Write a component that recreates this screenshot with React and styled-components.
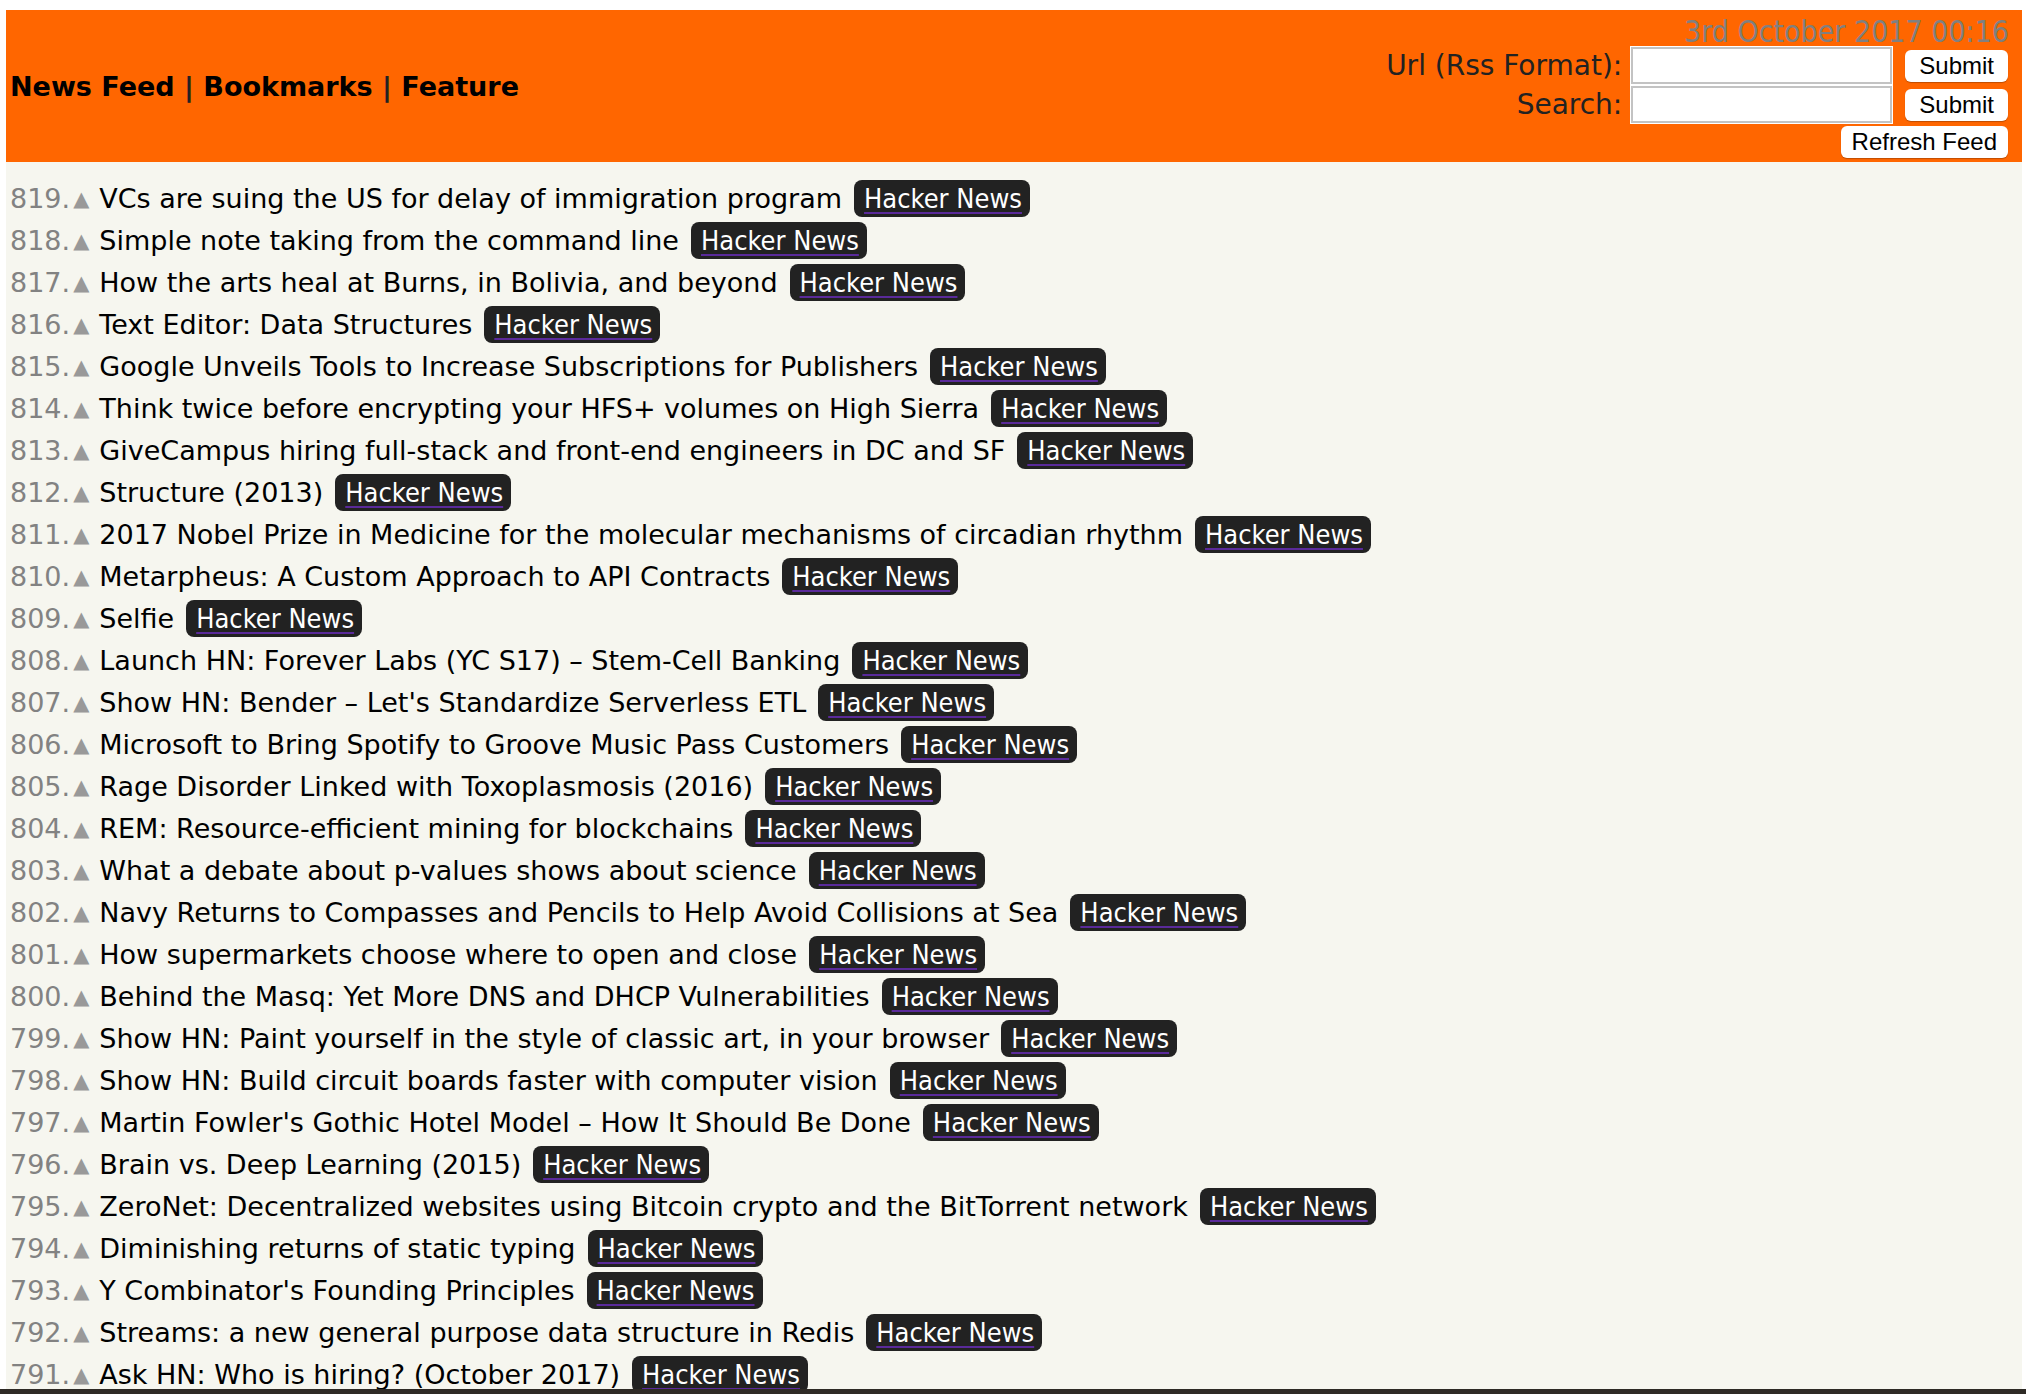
import React from "react";
import styled, { createGlobalStyle } from "styled-components";

const Global = createGlobalStyle`
  html, body { background: #ffffff; }
  body {
    margin: 10px 4px 0 6px;
    font-family: "DejaVu Sans", Verdana, sans-serif;
  }
`;

const Header = styled.header`
  background: #ff6600;
  height: 152px;
  box-sizing: border-box;
  display: flex;
  align-items: center;
  justify-content: space-between;
  padding: 0 14px 0 4px;
`;

const Nav = styled.nav`
  font-family: "DejaVu Sans", Verdana, sans-serif;
  font-weight: bold;
  font-size: 27px;
  color: #000;
  display: flex;
  align-items: center;
  white-space: pre;
`;

const NavLink = styled.a`
  color: #000;
  text-decoration: none;
`;

const Sep = styled.span`
  color: #222;
`;

const Controls = styled.form`
  display: grid;
  grid-template-columns: auto auto auto;
  align-items: center;
  font-family: "DejaVu Sans", Tahoma, sans-serif;
`;

const DateLine = styled.div`
  grid-column: 1 / -1;
  justify-self: end;
  font-family: "DejaVu Sans Condensed", Tahoma, sans-serif;
  font-size: 30px;
  line-height: 32px;
  color: #808080;
  margin-right: -1px;
  position: relative;
  top: 2px;
`;

const Label = styled.label`
  font-size: 28px;
  color: #222;
  justify-self: end;
  margin-right: 9px;
`;

const Input = styled.input`
  box-sizing: border-box;
  width: 261px;
  height: 37px;
  margin: 1px 0;
  border: 2px solid #c3c3c3;
  outline: 1px solid #fff;
  outline-offset: 0;
  background: #fff;
`;

const Button = styled.button`
  box-sizing: border-box;
  height: 32px;
  padding: 0 ${(p) => (p.$compact ? "11px" : "14px")};
  margin-left: ${(p) => (p.$spaced ? "13px" : "0")};
  background: #fff;
  border: none;
  border-radius: 6px;
  box-shadow: 0 1px 1px rgba(0, 0, 0, 0.25);
  font-family: "Liberation Sans", Arial, sans-serif;
  font-size: 24px;
  color: #000;
`;

const RefreshRow = styled.div`
  grid-column: 1 / -1;
  justify-self: end;
  margin-top: 2px;
`;

const List = styled.ol`
  list-style: none;
  margin: 0;
  padding: 15px 0 40px 4px;
  background: #f6f6ef;
`;

const Row = styled.li`
  height: 42px;
  display: flex;
  align-items: center;
  white-space: nowrap;
  font-size: 27px;
  color: #000;
`;

const Rank = styled.span`
  color: #828282;
`;

const Vote = styled.span`
  color: #999999;
  font-size: 21px;
  margin: 0 10px 0 3px;
  position: relative;
  top: 1px;
`;

const Title = styled.span`
  color: #000;
`;

const Badge = styled.a`
  display: inline-flex;
  align-items: center;
  height: 37px;
  box-sizing: border-box;
  margin-left: 12px;
  padding: 0 8px 0 10px;
  background: #222222;
  border-radius: 8px;
  color: #fff;
  font-family: "DejaVu Sans Condensed", Tahoma, sans-serif;
  font-size: 27px;
  text-decoration: underline;
  text-decoration-color: #5a2a9a;
  text-decoration-thickness: 2px;
  text-underline-offset: 4px;
`;

const BottomEdge = styled.div`
  position: fixed;
  left: 0;
  right: 0;
  bottom: 0;
  height: 5px;
  background: #2e2a25;
`;

const items = [
  [819, "VCs are suing the US for delay of immigration program"],
  [818, "Simple note taking from the command line"],
  [817, "How the arts heal at Burns, in Bolivia, and beyond"],
  [816, "Text Editor: Data Structures"],
  [815, "Google Unveils Tools to Increase Subscriptions for Publishers"],
  [814, "Think twice before encrypting your HFS+ volumes on High Sierra"],
  [813, "GiveCampus hiring full-stack and front-end engineers in DC and SF"],
  [812, "Structure (2013)"],
  [811, "2017 Nobel Prize in Medicine for the molecular mechanisms of circadian rhythm"],
  [810, "Metarpheus: A Custom Approach to API Contracts"],
  [809, "Selfie"],
  [808, "Launch HN: Forever Labs (YC S17) – Stem-Cell Banking"],
  [807, "Show HN: Bender – Let's Standardize Serverless ETL"],
  [806, "Microsoft to Bring Spotify to Groove Music Pass Customers"],
  [805, "Rage Disorder Linked with Toxoplasmosis (2016)"],
  [804, "REM: Resource-efficient mining for blockchains"],
  [803, "What a debate about p-values shows about science"],
  [802, "Navy Returns to Compasses and Pencils to Help Avoid Collisions at Sea"],
  [801, "How supermarkets choose where to open and close"],
  [800, "Behind the Masq: Yet More DNS and DHCP Vulnerabilities"],
  [799, "Show HN: Paint yourself in the style of classic art, in your browser"],
  [798, "Show HN: Build circuit boards faster with computer vision"],
  [797, "Martin Fowler's Gothic Hotel Model – How It Should Be Done"],
  [796, "Brain vs. Deep Learning (2015)"],
  [795, "ZeroNet: Decentralized websites using Bitcoin crypto and the BitTorrent network"],
  [794, "Diminishing returns of static typing"],
  [793, "Y Combinator's Founding Principles"],
  [792, "Streams: a new general purpose data structure in Redis"],
  [791, "Ask HN: Who is hiring? (October 2017)"],
];

export default function App() {
  return (
    <>
      <Global />
      <Header>
        <Nav>
          <NavLink href="#">News Feed</NavLink>
          <Sep> | </Sep>
          <NavLink href="#">Bookmarks</NavLink>
          <Sep> | </Sep>
          <NavLink href="#">Feature</NavLink>
        </Nav>
        <Controls onSubmit={(e) => e.preventDefault()}>
          <DateLine>3rd October 2017 00:16</DateLine>
          <Label>Url (Rss Format):</Label>
          <Input type="text" />
          <Button $spaced type="button">Submit</Button>
          <Label>Search:</Label>
          <Input type="text" />
          <Button $spaced type="button">Submit</Button>
          <RefreshRow>
            <Button $compact type="button">Refresh Feed</Button>
          </RefreshRow>
        </Controls>
      </Header>
      <List>
        {items.map(([n, t]) => (
          <Row key={n}>
            <Rank>{n}.</Rank>
            <Vote>▲</Vote>
            <Title>{t}</Title>
            <Badge href="#">Hacker News</Badge>
          </Row>
        ))}
      </List>
      <BottomEdge />
    </>
  );
}
